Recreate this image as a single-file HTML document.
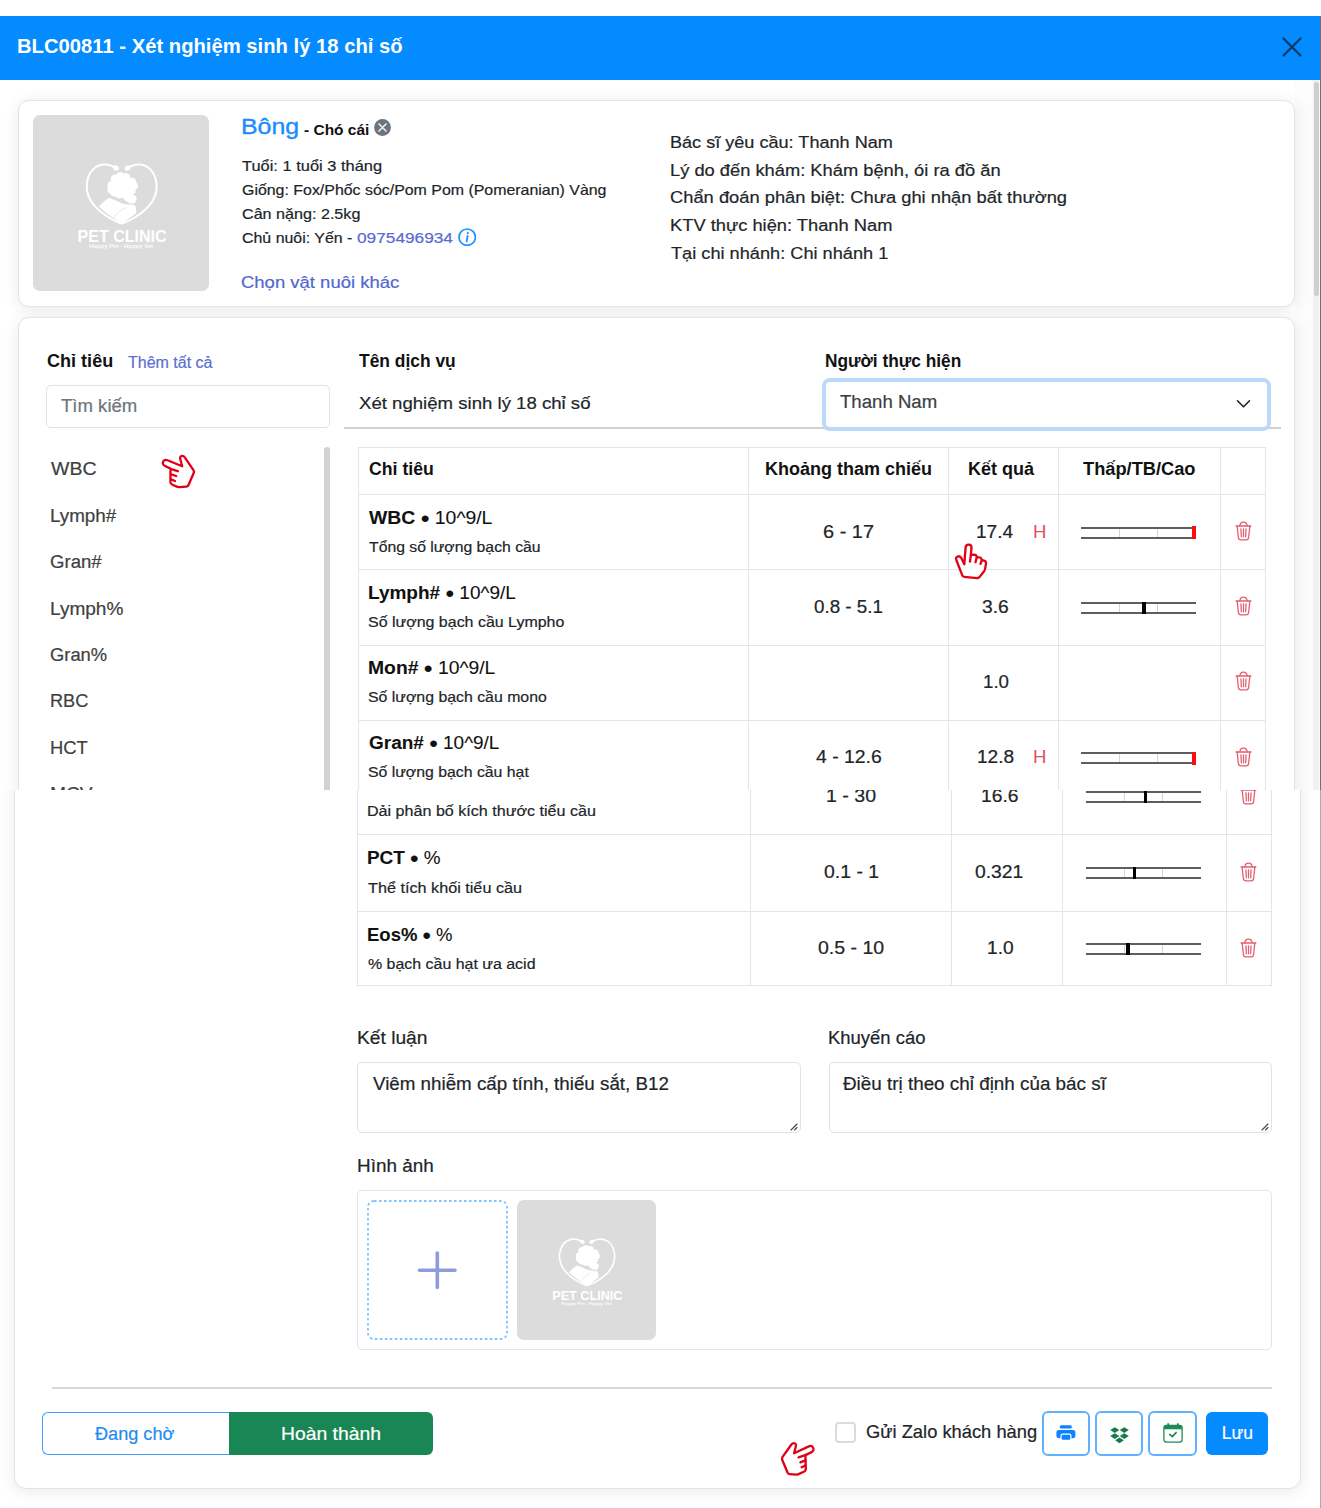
<!DOCTYPE html>
<html><head><meta charset="utf-8"><title>BLC00811</title>
<style>
html,body{margin:0;padding:0;background:#fff;}
body{width:1321px;height:1508px;position:relative;overflow:hidden;font-family:"Liberation Sans",sans-serif;}
.sec div,.sec svg{position:absolute;}
.t{white-space:pre;transform-origin:0 0;}
.sec{position:absolute;left:0;width:1321px;overflow:hidden;}
</style></head><body>
<div class="sec" style="top:0;height:790px">
<div style="left:0.0px;top:16.0px;width:1321.0px;height:64.0px;background:#048bff"></div>
<div class="t" style="left:16.99px;top:35.79px;font-size:20.1px;line-height:20.1px;color:#ffffff;font-weight:700;transform:scaleX(1.0068);">BLC00811 - Xét nghiệm sinh lý 18 chỉ số</div>
<svg style="position:absolute;left:1282.0px;top:37.0px;" width="20" height="20" viewBox="0 0 20 20"><path d="M1.5 1.5L18.5 18.5M18.5 1.5L1.5 18.5" stroke="#0b3a63" stroke-width="2.2" stroke-linecap="round"/></svg>
<div style="left:1295.0px;top:80.0px;width:25.0px;height:710.0px;background:#fcfcfc"></div>
<div style="left:1313.0px;top:80.0px;width:6.0px;height:710.0px;background:#f0f0f0"></div>
<div style="left:1313.5px;top:82.0px;width:5.0px;height:214.0px;background:#cfcfcf;border-radius:3px"></div>
<div style="left:1320.0px;top:16.0px;width:1.0px;height:774.0px;background:#707070"></div>
<div style="left:18.0px;top:100.0px;width:1277.0px;height:207.0px;background:#fff;border:1px solid #e1e4e8;border-radius:11px;box-sizing:border-box;box-shadow:0 2px 16px rgba(0,0,0,0.085)"></div>
<div style="left:33.0px;top:115.0px;width:176.0px;height:176.0px;background:#dcdcdc;border-radius:7px"></div>
<svg style="position:absolute;left:33.0px;top:115.0px" width="176.0" height="176.0"><g transform="scale(1.0000)">
<path d="M82.5 52.8C78 49.8 74 49.2 70.5 49.5C62 50.3 55.5 57 54 67.5C52.5 79 58.5 90 70 98.5C76.5 103.5 82.5 106.5 88.7 108.5C95 106.5 101 103.5 107.5 98.5C119 90 125 79 123.3 67.5C121.8 57 115.5 50.3 107 49.5C103.5 49.2 99.5 49.8 95 52.8" fill="none" stroke="#fff" stroke-width="2.1" stroke-linecap="round"/>
<ellipse cx="83" cy="53" rx="3" ry="2.4" transform="rotate(25 83 53)" fill="#fff"/><ellipse cx="94.5" cy="53" rx="3" ry="2.4" transform="rotate(-25 94.5 53)" fill="#fff"/>
<path d="M78 66C77 62 79.5 59 83 59.5C84.5 57 88.5 56.5 91 58.5C94 57.5 97.5 59.5 97.5 63C100 62 103.5 64 103.3 67.5C106 69.5 105.5 73.5 102.5 75C103 77.5 101.5 79.5 99 79.5L102 80.5C104.5 82.5 104 86.5 101.5 88C99.5 89 96 88.5 94.5 87C92.5 86 90.5 84.5 90 82.5C87.5 84 84.5 83.5 83 81.5C81 82 78 81 77.5 78.5C75 78 73.5 75 75 72.5C73.5 70.5 74.5 67 78 66Z" fill="#fff"/>
<path d="M66 91.5C68.5 88.5 72 85.5 75.5 83C78.5 83.5 82 85 85 86.5C88.5 88.5 92 89.5 95.5 89.5C98 89.5 100.5 89.8 102 90.5C103.2 93 103.4 95.5 103.2 98C98.5 102 93.5 105.5 88.7 108.3C81.5 104.5 73 98.5 66 91.5Z" fill="#fff"/>
<path d="M80.5 103C84 98 88.5 94.5 93 92.5" fill="none" stroke="#e6e6e6" stroke-width="0.9"/>
<text x="89.1" y="126.5" text-anchor="middle" font-family="Liberation Sans" font-weight="700" font-size="16.2" fill="#fff" textLength="89" lengthAdjust="spacingAndGlyphs">PET CLINIC</text>
<text x="88.1" y="133" text-anchor="middle" font-family="Liberation Sans" font-weight="700" font-size="5" fill="#fff" opacity="0.9" textLength="64" lengthAdjust="spacingAndGlyphs">Happy Pet - Happy Vet</text>
</g></svg>
<div class="t" style="left:240.98px;top:115.94px;font-size:22.4px;line-height:22.4px;color:#1a8cff;font-weight:400;transform:scaleX(1.1122);-webkit-text-stroke:0.35px currentColor">Bông</div>
<div class="t" style="left:304.00px;top:121.70px;font-size:15px;line-height:15px;color:#111111;font-weight:700;transform:scaleX(1.0317);">- Chó cái</div>
<svg style="position:absolute;left:373.5px;top:119.0px;" width="17" height="17" viewBox="0 0 17 17"><circle cx="8.5" cy="8.5" r="8.4" fill="#6c757d"/><path d="M5 5L12 12M12 5L5 12" stroke="#e9ecef" stroke-width="1.7" stroke-linecap="round"/></svg>
<div class="t" style="left:241.60px;top:158.93px;font-size:14.5px;line-height:14.5px;color:#212529;font-weight:400;transform:scaleX(1.1333);-webkit-text-stroke:0.2px currentColor">Tuổi: 1 tuổi 3 tháng</div>
<div class="t" style="left:241.60px;top:183.13px;font-size:14.5px;line-height:14.5px;color:#212529;font-weight:400;transform:scaleX(1.0976);-webkit-text-stroke:0.2px currentColor">Giống: Fox/Phốc sóc/Pom Pom (Pomeranian) Vàng</div>
<div class="t" style="left:241.60px;top:207.13px;font-size:14.5px;line-height:14.5px;color:#212529;font-weight:400;transform:scaleX(1.1123);-webkit-text-stroke:0.2px currentColor">Cân nặng: 2.5kg</div>
<div class="t" style="left:241.60px;top:231.13px;font-size:14.5px;line-height:14.5px;color:#212529;font-weight:400;transform:scaleX(1.0980);-webkit-text-stroke:0.2px currentColor">Chủ nuôi: Yến -</div>
<div class="t" style="left:357.00px;top:231.13px;font-size:14.5px;line-height:14.5px;color:#5b6ad0;font-weight:400;transform:scaleX(1.1901);-webkit-text-stroke:0.2px currentColor">0975496934</div>
<svg style="position:absolute;left:457.5px;top:227.8px;" width="18.4" height="18.4" viewBox="0 0 18.4 18.4"><circle cx="9.2" cy="9.2" r="8.2" fill="none" stroke="#1e90ff" stroke-width="1.7"/><circle cx="9.8" cy="5.2" r="1.1" fill="#1e90ff"/><path d="M9.6 8L8.7 13.3" stroke="#1e90ff" stroke-width="1.8" stroke-linecap="round"/></svg>
<div class="t" style="left:241.23px;top:274.36px;font-size:17.3px;line-height:17.3px;color:#5167d0;font-weight:400;transform:scaleX(1.0694);-webkit-text-stroke:0.2px currentColor">Chọn vật nuôi khác</div>
<div class="t" style="left:669.94px;top:134.12px;font-size:17.1px;line-height:17.1px;color:#212529;font-weight:400;transform:scaleX(1.0579);-webkit-text-stroke:0.2px currentColor">Bác sĩ yêu cầu: Thanh Nam</div>
<div class="t" style="left:669.93px;top:161.62px;font-size:17.1px;line-height:17.1px;color:#212529;font-weight:400;transform:scaleX(1.0704);-webkit-text-stroke:0.2px currentColor">Lý do đến khám: Khám bệnh, ói ra đồ ăn</div>
<div class="t" style="left:669.93px;top:189.32px;font-size:17.1px;line-height:17.1px;color:#212529;font-weight:400;transform:scaleX(1.0715);-webkit-text-stroke:0.2px currentColor">Chẩn đoán phân biệt: Chưa ghi nhận bất thường</div>
<div class="t" style="left:669.93px;top:217.02px;font-size:17.1px;line-height:17.1px;color:#212529;font-weight:400;transform:scaleX(1.0704);-webkit-text-stroke:0.2px currentColor">KTV thực hiện: Thanh Nam</div>
<div class="t" style="left:671.00px;top:244.92px;font-size:17.1px;line-height:17.1px;color:#212529;font-weight:400;transform:scaleX(1.0637);-webkit-text-stroke:0.2px currentColor">Tại chi nhánh: Chi nhánh 1</div>
<div style="left:18.0px;top:317.0px;width:1277.0px;height:683.0px;background:#fff;border:1px solid #e1e4e8;border-radius:11px;box-sizing:border-box;box-shadow:0 2px 16px rgba(0,0,0,0.085)"></div>
<div class="t" style="left:47.00px;top:352.89px;font-size:17.5px;line-height:17.5px;color:#111111;font-weight:700;transform:scaleX(1.0317);">Chỉ tiêu</div>
<div class="t" style="left:128.00px;top:355.46px;font-size:16px;line-height:16px;color:#5b6fd0;font-weight:400;transform:scaleX(1.0000);-webkit-text-stroke:0.2px currentColor">Thêm tất cả</div>
<div style="left:46.0px;top:384.5px;width:284.0px;height:43.0px;border:1px solid #dbe3ee;border-radius:5px;box-sizing:border-box;background:#fff"></div>
<div class="t" style="left:61.00px;top:398.09px;font-size:17.5px;line-height:17.5px;color:#6c757d;font-weight:400;transform:scaleX(1.0606);-webkit-text-stroke:0.2px currentColor">Tìm kiếm</div>
<div class="t" style="left:51.40px;top:460.46px;font-size:18px;line-height:18px;color:#404040;font-weight:400;transform:scaleX(1.0854);-webkit-text-stroke:0.2px currentColor">WBC</div>
<div class="t" style="left:50.35px;top:507.16px;font-size:18px;line-height:18px;color:#404040;font-weight:400;transform:scaleX(1.0460);-webkit-text-stroke:0.2px currentColor">Lymph#</div>
<div class="t" style="left:50.37px;top:553.06px;font-size:18px;line-height:18px;color:#404040;font-weight:400;transform:scaleX(1.0327);-webkit-text-stroke:0.2px currentColor">Gran#</div>
<div class="t" style="left:50.34px;top:599.56px;font-size:18px;line-height:18px;color:#404040;font-weight:400;transform:scaleX(1.0574);-webkit-text-stroke:0.2px currentColor">Lymph%</div>
<div class="t" style="left:50.38px;top:646.16px;font-size:18px;line-height:18px;color:#404040;font-weight:400;transform:scaleX(1.0200);-webkit-text-stroke:0.2px currentColor">Gran%</div>
<div class="t" style="left:50.39px;top:692.36px;font-size:18px;line-height:18px;color:#404040;font-weight:400;transform:scaleX(1.0083);-webkit-text-stroke:0.2px currentColor">RBC</div>
<div class="t" style="left:50.38px;top:738.86px;font-size:18px;line-height:18px;color:#404040;font-weight:400;transform:scaleX(1.0194);-webkit-text-stroke:0.2px currentColor">HCT</div>
<div class="t" style="left:50.33px;top:785.16px;font-size:18px;line-height:18px;color:#404040;font-weight:400;transform:scaleX(1.0667);-webkit-text-stroke:0.2px currentColor">MCV</div>
<div style="left:324.0px;top:447.0px;width:6.0px;height:353.0px;background:#d2d2d2;border-radius:3px"></div>
<div class="t" style="left:358.50px;top:352.89px;font-size:17.5px;line-height:17.5px;color:#111111;font-weight:700;transform:scaleX(0.9948);">Tên dịch vụ</div>
<div class="t" style="left:358.50px;top:394.64px;font-size:17.2px;line-height:17.2px;color:#212529;font-weight:400;transform:scaleX(1.0818);-webkit-text-stroke:0.2px currentColor">Xét nghiệm sinh lý 18 chỉ số</div>
<div class="t" style="left:825.41px;top:352.89px;font-size:17.5px;line-height:17.5px;color:#111111;font-weight:700;transform:scaleX(0.9882);">Người thực hiện</div>
<div style="left:344.0px;top:427.0px;width:936.6px;height:1.5px;background:#d0d0d0"></div>
<div style="left:821.5px;top:378.0px;width:449.5px;height:52.6px;border:4px solid #bcd8fb;border-radius:8px;box-sizing:border-box;background:#fff"></div>
<div class="t" style="left:840.30px;top:393.70px;font-size:17.6px;line-height:17.6px;color:#3a3f44;font-weight:400;transform:scaleX(1.0571);-webkit-text-stroke:0.2px currentColor">Thanh Nam</div>
<svg style="position:absolute;left:1236.0px;top:399.0px;" width="15" height="10" viewBox="0 0 15 10"><path d="M1.5 1.8L7.5 7.8L13.5 1.8" fill="none" stroke="#222" stroke-width="1.6" stroke-linecap="round" stroke-linejoin="round"/></svg>
<div style="left:358.4px;top:447.0px;width:907.4px;height:453.0px;border:1px solid #e2e6ec;box-sizing:border-box;background:#fff"></div>
<div style="left:748.2px;top:447.0px;width:1.0px;height:453.0px;background:#e2e6ec"></div>
<div style="left:947.7px;top:447.0px;width:1.0px;height:453.0px;background:#e2e6ec"></div>
<div style="left:1057.7px;top:447.0px;width:1.0px;height:453.0px;background:#e2e6ec"></div>
<div style="left:1220.4px;top:447.0px;width:1.0px;height:453.0px;background:#e2e6ec"></div>
<div style="left:358.4px;top:494.0px;width:907.4px;height:1.0px;background:#e2e6ec"></div>
<div style="left:358.4px;top:569.3px;width:907.4px;height:1.0px;background:#e2e6ec"></div>
<div style="left:358.4px;top:644.5px;width:907.4px;height:1.0px;background:#e2e6ec"></div>
<div style="left:358.4px;top:719.6px;width:907.4px;height:1.0px;background:#e2e6ec"></div>
<div class="t" style="left:369.30px;top:461.20px;font-size:17.6px;line-height:17.6px;color:#111111;font-weight:700;transform:scaleX(1.0047);">Chỉ tiêu</div>
<div class="t" style="left:765.18px;top:461.20px;font-size:17.6px;line-height:17.6px;color:#111111;font-weight:700;transform:scaleX(1.0236);">Khoảng tham chiếu</div>
<div class="t" style="left:968.48px;top:461.20px;font-size:17.6px;line-height:17.6px;color:#111111;font-weight:700;transform:scaleX(1.0234);">Kết quả</div>
<div class="t" style="left:1083.00px;top:461.20px;font-size:17.6px;line-height:17.6px;color:#111111;font-weight:700;transform:scaleX(1.0370);">Thấp/TB/Cao</div>
<div class="t" style="left:369.30px;top:508.76px;font-size:18.0px;line-height:18.0px;color:#111111;font-weight:400;transform:scaleX(1.0757);-webkit-text-stroke:0.08px currentColor"><b>WBC</b> <span style="font-size:1.3em;line-height:0;position:relative;top:3px">•</span> 10^9/L</div>
<div class="t" style="left:369.00px;top:538.73px;font-size:15.2px;line-height:15.2px;color:#212529;font-weight:400;transform:scaleX(1.0376);-webkit-text-stroke:0.2px currentColor">Tổng số lượng bạch cầu</div>
<div class="t" style="left:822.66px;top:523.59px;font-size:17.5px;line-height:17.5px;color:#212529;font-weight:400;transform:scaleX(1.1419);-webkit-text-stroke:0.2px currentColor">6 - 17</div>
<div class="t" style="left:975.91px;top:523.59px;font-size:17.5px;line-height:17.5px;color:#212529;font-weight:400;transform:scaleX(1.0909);-webkit-text-stroke:0.2px currentColor">17.4</div>
<div class="t" style="left:1033.44px;top:523.59px;font-size:17.5px;line-height:17.5px;color:#e0485c;font-weight:400;transform:scaleX(1.0636);opacity:0.95">H</div>
<div style="left:1081.0px;top:526.5px;width:115.0px;height:12px;border-top:2px solid #5e5e5e;border-bottom:2px solid #5e5e5e;box-sizing:border-box"></div>
<div style="left:1118.8px;top:528.5px;width:1.0px;height:8.0px;background:#d6d6d6"></div>
<div style="left:1157.2px;top:528.5px;width:1.0px;height:8.0px;background:#d6d6d6"></div>
<div style="left:1192.0px;top:526.0px;width:4.0px;height:13.0px;background:#ff0d0d"></div>
<svg style="position:absolute;left:1234.6px;top:520.9px;" width="17.0" height="20.0" viewBox="0 0 18 21"><g fill="none" stroke="#e35d6f" stroke-width="1.35" stroke-linejoin="round" stroke-linecap="round"><path d="M1.2 5.2H16.8"/><path d="M5.2 5.0C5.4 2.6 6.2 1.2 9 1.2C11.8 1.2 12.6 2.6 12.8 5.0"/><path d="M2.3 5.4L3.6 17.6C3.8 19.1 4.8 19.8 6.2 19.8H11.8C13.2 19.8 14.2 19.1 14.4 17.6L15.7 5.4"/><path d="M6.3 8.2L6.7 16.6M9 8.2V16.6M11.7 8.2L11.3 16.6"/></g></svg>
<div class="t" style="left:368.24px;top:584.06px;font-size:18.0px;line-height:18.0px;color:#111111;font-weight:400;transform:scaleX(1.0554);-webkit-text-stroke:0.08px currentColor"><b>Lymph#</b> <span style="font-size:1.3em;line-height:0;position:relative;top:3px">•</span> 10^9/L</div>
<div class="t" style="left:367.95px;top:614.03px;font-size:15.2px;line-height:15.2px;color:#212529;font-weight:400;transform:scaleX(1.0514);-webkit-text-stroke:0.2px currentColor">Số lượng bạch cầu Lympho</div>
<div class="t" style="left:813.60px;top:598.89px;font-size:17.5px;line-height:17.5px;color:#212529;font-weight:400;transform:scaleX(1.0734);-webkit-text-stroke:0.2px currentColor">0.8 - 5.1</div>
<div class="t" style="left:982.20px;top:598.89px;font-size:17.5px;line-height:17.5px;color:#212529;font-weight:400;transform:scaleX(1.1000);-webkit-text-stroke:0.2px currentColor">3.6</div>
<div style="left:1081.0px;top:601.8px;width:115.0px;height:12px;border-top:2px solid #5e5e5e;border-bottom:2px solid #5e5e5e;box-sizing:border-box"></div>
<div style="left:1118.8px;top:603.8px;width:1.0px;height:8.0px;background:#d6d6d6"></div>
<div style="left:1157.2px;top:603.8px;width:1.0px;height:8.0px;background:#d6d6d6"></div>
<div style="left:1142.2px;top:601.8px;width:3.6px;height:12.0px;background:#000"></div>
<svg style="position:absolute;left:1234.6px;top:596.2px;" width="17.0" height="20.0" viewBox="0 0 18 21"><g fill="none" stroke="#e35d6f" stroke-width="1.35" stroke-linejoin="round" stroke-linecap="round"><path d="M1.2 5.2H16.8"/><path d="M5.2 5.0C5.4 2.6 6.2 1.2 9 1.2C11.8 1.2 12.6 2.6 12.8 5.0"/><path d="M2.3 5.4L3.6 17.6C3.8 19.1 4.8 19.8 6.2 19.8H11.8C13.2 19.8 14.2 19.1 14.4 17.6L15.7 5.4"/><path d="M6.3 8.2L6.7 16.6M9 8.2V16.6M11.7 8.2L11.3 16.6"/></g></svg>
<div class="t" style="left:368.23px;top:659.26px;font-size:18.0px;line-height:18.0px;color:#111111;font-weight:400;transform:scaleX(1.0729);-webkit-text-stroke:0.08px currentColor"><b>Mon#</b> <span style="font-size:1.3em;line-height:0;position:relative;top:3px">•</span> 10^9/L</div>
<div class="t" style="left:367.96px;top:689.23px;font-size:15.2px;line-height:15.2px;color:#212529;font-weight:400;transform:scaleX(1.0441);-webkit-text-stroke:0.2px currentColor">Số lượng bạch cầu mono</div>
<div class="t" style="left:982.93px;top:674.09px;font-size:17.5px;line-height:17.5px;color:#212529;font-weight:400;transform:scaleX(1.0696);-webkit-text-stroke:0.2px currentColor">1.0</div>
<svg style="position:absolute;left:1234.6px;top:671.4px;" width="17.0" height="20.0" viewBox="0 0 18 21"><g fill="none" stroke="#e35d6f" stroke-width="1.35" stroke-linejoin="round" stroke-linecap="round"><path d="M1.2 5.2H16.8"/><path d="M5.2 5.0C5.4 2.6 6.2 1.2 9 1.2C11.8 1.2 12.6 2.6 12.8 5.0"/><path d="M2.3 5.4L3.6 17.6C3.8 19.1 4.8 19.8 6.2 19.8H11.8C13.2 19.8 14.2 19.1 14.4 17.6L15.7 5.4"/><path d="M6.3 8.2L6.7 16.6M9 8.2V16.6M11.7 8.2L11.3 16.6"/></g></svg>
<div class="t" style="left:369.30px;top:734.36px;font-size:18.0px;line-height:18.0px;color:#111111;font-weight:400;transform:scaleX(1.0540);-webkit-text-stroke:0.08px currentColor"><b>Gran#</b> <span style="font-size:1.3em;line-height:0;position:relative;top:3px">•</span> 10^9/L</div>
<div class="t" style="left:367.96px;top:764.33px;font-size:15.2px;line-height:15.2px;color:#212529;font-weight:400;transform:scaleX(1.0416);-webkit-text-stroke:0.2px currentColor">Số lượng bạch cầu hạt</div>
<div class="t" style="left:815.60px;top:749.19px;font-size:17.5px;line-height:17.5px;color:#212529;font-weight:400;transform:scaleX(1.1085);-webkit-text-stroke:0.2px currentColor">4 - 12.6</div>
<div class="t" style="left:976.91px;top:749.19px;font-size:17.5px;line-height:17.5px;color:#212529;font-weight:400;transform:scaleX(1.0909);-webkit-text-stroke:0.2px currentColor">12.8</div>
<div class="t" style="left:1033.44px;top:749.19px;font-size:17.5px;line-height:17.5px;color:#e0485c;font-weight:400;transform:scaleX(1.0636);opacity:0.95">H</div>
<div style="left:1081.0px;top:752.1px;width:115.0px;height:12px;border-top:2px solid #5e5e5e;border-bottom:2px solid #5e5e5e;box-sizing:border-box"></div>
<div style="left:1118.8px;top:754.1px;width:1.0px;height:8.0px;background:#d6d6d6"></div>
<div style="left:1157.2px;top:754.1px;width:1.0px;height:8.0px;background:#d6d6d6"></div>
<div style="left:1192.0px;top:751.6px;width:4.0px;height:13.0px;background:#ff0d0d"></div>
<svg style="position:absolute;left:1234.6px;top:746.5px;" width="17.0" height="20.0" viewBox="0 0 18 21"><g fill="none" stroke="#e35d6f" stroke-width="1.35" stroke-linejoin="round" stroke-linecap="round"><path d="M1.2 5.2H16.8"/><path d="M5.2 5.0C5.4 2.6 6.2 1.2 9 1.2C11.8 1.2 12.6 2.6 12.8 5.0"/><path d="M2.3 5.4L3.6 17.6C3.8 19.1 4.8 19.8 6.2 19.8H11.8C13.2 19.8 14.2 19.1 14.4 17.6L15.7 5.4"/><path d="M6.3 8.2L6.7 16.6M9 8.2V16.6M11.7 8.2L11.3 16.6"/></g></svg>
<svg style="position:absolute;left:150.0px;top:445.0px;" width="60" height="55" viewBox="0 0 60 55"><g fill="#fff" stroke="#e30016" stroke-width="2.3" stroke-linejoin="round" stroke-linecap="round"><path d="M20.5 23.6L14.6 20.8C12.8 19.9 12.3 17.9 13.3 16.3C14.2 14.9 15.9 14.6 17.5 15.3L32.2 21.3L30.2 13.8C29.8 12.3 30.6 11.1 31.9 10.9C33.1 10.7 34.1 11.3 34.8 12.4L43.6 25.3C44.1 26.0 44.1 27.0 43.8 27.8L38.4 40.2C38.0 41.1 37.2 41.6 36.2 41.7L29.8 42.2C28.9 42.3 28.2 42.1 27.4 41.8L22.4 39.8C21.1 39.3 20.4 38.1 20.4 36.8L20.5 23.6Z"/><path d="M21 24.1L27.9 26.2M21 29.3L26.2 31.0M21 34.4L25.0 36.0" fill="none"/></g></svg>
<svg style="position:absolute;left:945.0px;top:535.0px;" width="55" height="55" viewBox="0 0 55 55"><g fill="#fff" stroke="#e30016" stroke-width="2.3" stroke-linejoin="round" stroke-linecap="round"><path d="M19.3 29.3L20.6 12.4C20.8 10.6 22.2 9.5 23.8 9.6C25.4 9.7 26.6 11.0 26.5 12.7L25.9 19.8L29.4 19.6C30.6 19.6 31.5 20.4 31.7 21.6L32.0 22.1L34.5 22.3C35.6 22.5 36.4 23.2 36.6 24.3L36.9 25.2L39.0 25.7C40.3 26.0 41.2 27.3 41.0 28.6L40.0 34.3C39.8 35.0 39.6 35.6 39.1 36.2L34.4 42.1C33.7 42.9 32.8 43.3 31.8 43.2L19.2 41.9C18.3 41.8 17.6 41.2 17.3 40.4L11.3 25.0C10.6 23.2 11.5 21.7 13.1 21.3C14.3 21.0 15.3 21.6 16.1 22.6L19.3 29.3Z"/><path d="M25.9 19.8L25.0 26.5M31.8 22.1L30.5 27.2M36.8 25.2L35.5 28.9" fill="none"/></g></svg>
</div>
<div class="sec" style="top:790px;height:718px"><div style="left:0;top:-790px;width:1321px;height:1508px">
<div style="left:1320.0px;top:790.0px;width:1.0px;height:718.0px;background:#ababab"></div>
<div style="left:14.0px;top:600.0px;width:1287.0px;height:888.7px;background:#fff;border:1px solid #e1e4e8;border-radius:12px;box-sizing:border-box;box-shadow:0 3px 16px rgba(0,0,0,0.085)"></div>
<div style="left:357.0px;top:700.0px;width:915.0px;height:286.3px;border:1px solid #e2e6ec;box-sizing:border-box;background:#fff"></div>
<div style="left:749.7px;top:700.0px;width:1.0px;height:286.0px;background:#e2e6ec"></div>
<div style="left:951.2px;top:700.0px;width:1.0px;height:286.0px;background:#e2e6ec"></div>
<div style="left:1061.5px;top:700.0px;width:1.0px;height:286.0px;background:#e2e6ec"></div>
<div style="left:1225.8px;top:700.0px;width:1.0px;height:286.0px;background:#e2e6ec"></div>
<div style="left:357.0px;top:834.3px;width:915.0px;height:1.0px;background:#e2e6ec"></div>
<div style="left:357.0px;top:910.5px;width:915.0px;height:1.0px;background:#e2e6ec"></div>
<div class="t" style="left:366.95px;top:803.45px;font-size:15.3px;line-height:15.3px;color:#212529;font-weight:400;transform:scaleX(1.0519);-webkit-text-stroke:0.2px currentColor">Dải phân bố kích thước tiểu cầu</div>
<div class="t" style="left:825.89px;top:787.90px;font-size:17.6px;line-height:17.6px;color:#212529;font-weight:400;transform:scaleX(1.1136);-webkit-text-stroke:0.2px currentColor">1 - 30</div>
<div class="t" style="left:980.81px;top:787.90px;font-size:17.6px;line-height:17.6px;color:#212529;font-weight:400;transform:scaleX(1.0939);-webkit-text-stroke:0.2px currentColor">16.6</div>
<div style="left:1086.0px;top:790.8px;width:115.0px;height:12px;border-top:2px solid #5e5e5e;border-bottom:2px solid #5e5e5e;box-sizing:border-box"></div>
<div style="left:1123.8px;top:792.8px;width:1.0px;height:8.0px;background:#d6d6d6"></div>
<div style="left:1162.2px;top:792.8px;width:1.0px;height:8.0px;background:#d6d6d6"></div>
<div style="left:1143.7px;top:790.8px;width:3.6px;height:12.0px;background:#000"></div>
<svg style="position:absolute;left:1240.2px;top:785.3px;" width="17.0" height="20.0" viewBox="0 0 18 21"><g fill="none" stroke="#e35d6f" stroke-width="1.35" stroke-linejoin="round" stroke-linecap="round"><path d="M1.2 5.2H16.8"/><path d="M5.2 5.0C5.4 2.6 6.2 1.2 9 1.2C11.8 1.2 12.6 2.6 12.8 5.0"/><path d="M2.3 5.4L3.6 17.6C3.8 19.1 4.8 19.8 6.2 19.8H11.8C13.2 19.8 14.2 19.1 14.4 17.6L15.7 5.4"/><path d="M6.3 8.2L6.7 16.6M9 8.2V16.6M11.7 8.2L11.3 16.6"/></g></svg>
<div class="t" style="left:366.96px;top:849.38px;font-size:18.1px;line-height:18.1px;color:#111111;font-weight:400;transform:scaleX(1.0435);-webkit-text-stroke:0.08px currentColor"><b>PCT</b> <span style="font-size:1.3em;line-height:0;position:relative;top:3px">•</span> %</div>
<div class="t" style="left:368.00px;top:879.75px;font-size:15.3px;line-height:15.3px;color:#212529;font-weight:400;transform:scaleX(1.0593);-webkit-text-stroke:0.2px currentColor">Thể tích khối tiểu cầu</div>
<div class="t" style="left:823.50px;top:864.20px;font-size:17.6px;line-height:17.6px;color:#212529;font-weight:400;transform:scaleX(1.1041);-webkit-text-stroke:0.2px currentColor">0.1 - 1</div>
<div class="t" style="left:975.30px;top:864.20px;font-size:17.6px;line-height:17.6px;color:#212529;font-weight:400;transform:scaleX(1.0977);-webkit-text-stroke:0.2px currentColor">0.321</div>
<div style="left:1086.0px;top:867.1px;width:115.0px;height:12px;border-top:2px solid #5e5e5e;border-bottom:2px solid #5e5e5e;box-sizing:border-box"></div>
<div style="left:1123.8px;top:869.1px;width:1.0px;height:8.0px;background:#d6d6d6"></div>
<div style="left:1162.2px;top:869.1px;width:1.0px;height:8.0px;background:#d6d6d6"></div>
<div style="left:1132.7px;top:867.1px;width:3.6px;height:12.0px;background:#000"></div>
<svg style="position:absolute;left:1240.2px;top:861.6px;" width="17.0" height="20.0" viewBox="0 0 18 21"><g fill="none" stroke="#e35d6f" stroke-width="1.35" stroke-linejoin="round" stroke-linecap="round"><path d="M1.2 5.2H16.8"/><path d="M5.2 5.0C5.4 2.6 6.2 1.2 9 1.2C11.8 1.2 12.6 2.6 12.8 5.0"/><path d="M2.3 5.4L3.6 17.6C3.8 19.1 4.8 19.8 6.2 19.8H11.8C13.2 19.8 14.2 19.1 14.4 17.6L15.7 5.4"/><path d="M6.3 8.2L6.7 16.6M9 8.2V16.6M11.7 8.2L11.3 16.6"/></g></svg>
<div class="t" style="left:366.98px;top:925.58px;font-size:18.1px;line-height:18.1px;color:#111111;font-weight:400;transform:scaleX(1.0220);-webkit-text-stroke:0.08px currentColor"><b>Eos%</b> <span style="font-size:1.3em;line-height:0;position:relative;top:3px">•</span> %</div>
<div class="t" style="left:368.00px;top:955.95px;font-size:15.3px;line-height:15.3px;color:#212529;font-weight:400;transform:scaleX(1.0419);-webkit-text-stroke:0.2px currentColor">% bạch cầu hạt ưa acid</div>
<div class="t" style="left:818.30px;top:940.40px;font-size:17.6px;line-height:17.6px;color:#212529;font-weight:400;transform:scaleX(1.1102);-webkit-text-stroke:0.2px currentColor">0.5 - 10</div>
<div class="t" style="left:986.51px;top:940.40px;font-size:17.6px;line-height:17.6px;color:#212529;font-weight:400;transform:scaleX(1.0870);-webkit-text-stroke:0.2px currentColor">1.0</div>
<div style="left:1086.0px;top:943.3px;width:115.0px;height:12px;border-top:2px solid #5e5e5e;border-bottom:2px solid #5e5e5e;box-sizing:border-box"></div>
<div style="left:1123.8px;top:945.3px;width:1.0px;height:8.0px;background:#d6d6d6"></div>
<div style="left:1162.2px;top:945.3px;width:1.0px;height:8.0px;background:#d6d6d6"></div>
<div style="left:1126.0px;top:943.3px;width:3.6px;height:12.0px;background:#000"></div>
<svg style="position:absolute;left:1240.2px;top:937.8px;" width="17.0" height="20.0" viewBox="0 0 18 21"><g fill="none" stroke="#e35d6f" stroke-width="1.35" stroke-linejoin="round" stroke-linecap="round"><path d="M1.2 5.2H16.8"/><path d="M5.2 5.0C5.4 2.6 6.2 1.2 9 1.2C11.8 1.2 12.6 2.6 12.8 5.0"/><path d="M2.3 5.4L3.6 17.6C3.8 19.1 4.8 19.8 6.2 19.8H11.8C13.2 19.8 14.2 19.1 14.4 17.6L15.7 5.4"/><path d="M6.3 8.2L6.7 16.6M9 8.2V16.6M11.7 8.2L11.3 16.6"/></g></svg>
<div class="t" style="left:357.13px;top:1028.76px;font-size:18.0px;line-height:18.0px;color:#212529;font-weight:400;transform:scaleX(1.0672);-webkit-text-stroke:0.2px currentColor">Kết luận</div>
<div class="t" style="left:828.28px;top:1028.76px;font-size:18.0px;line-height:18.0px;color:#212529;font-weight:400;transform:scaleX(1.0245);-webkit-text-stroke:0.2px currentColor">Khuyến cáo</div>
<div style="left:357.0px;top:1061.6px;width:444.0px;height:71.9px;border:1px solid #dce4ee;border-radius:5px;box-sizing:border-box;background:#fff"></div>
<svg style="position:absolute;left:790.0px;top:1122.5px;" width="8" height="8" viewBox="0 0 8 8"><path d="M7 1L1 7M7 4.5L4.5 7" stroke="#444" stroke-width="1.1" stroke-linecap="round"/></svg>
<div style="left:829.0px;top:1061.6px;width:443.2px;height:71.9px;border:1px solid #dce4ee;border-radius:5px;box-sizing:border-box;background:#fff"></div>
<svg style="position:absolute;left:1261.2px;top:1122.5px;" width="8" height="8" viewBox="0 0 8 8"><path d="M7 1L1 7M7 4.5L4.5 7" stroke="#444" stroke-width="1.1" stroke-linecap="round"/></svg>
<div class="t" style="left:373.00px;top:1075.79px;font-size:17.5px;line-height:17.5px;color:#212529;font-weight:400;transform:scaleX(1.0721);-webkit-text-stroke:0.2px currentColor">Viêm nhiễm cấp tính, thiếu sắt, B12</div>
<div class="t" style="left:843.40px;top:1075.79px;font-size:17.5px;line-height:17.5px;color:#212529;font-weight:400;transform:scaleX(1.0767);-webkit-text-stroke:0.2px currentColor">Điều trị theo chỉ định của bác sĩ</div>
<div class="t" style="left:357.15px;top:1157.16px;font-size:18.0px;line-height:18.0px;color:#212529;font-weight:400;transform:scaleX(1.0493);-webkit-text-stroke:0.2px currentColor">Hình ảnh</div>
<div style="left:357.3px;top:1189.7px;width:914.9px;height:159.9px;border:1px solid #e2e6ec;border-radius:5px;box-sizing:border-box;background:#fff"></div>
<svg style="position:absolute;left:367.0px;top:1200.0px;" width="141" height="140" viewBox="0 0 141 140"><rect x="1" y="1" width="139" height="138" rx="6" fill="none" stroke="#82c4ff" stroke-width="1.8" stroke-dasharray="2.6 2.4"/></svg>
<svg style="position:absolute;left:417.0px;top:1249.5px;" width="41" height="41" viewBox="0 0 41 41"><path d="M20.3 3V37.5M2.5 20.2H38" stroke="#8f9bda" stroke-width="3.6" stroke-linecap="round"/></svg>
<div style="left:516.7px;top:1200.0px;width:139.0px;height:140.0px;background:#dcdcdc;border-radius:7px"></div>
<svg style="position:absolute;left:516.7px;top:1200.0px" width="139.0" height="139.0"><g transform="scale(0.7898)">
<path d="M82.5 52.8C78 49.8 74 49.2 70.5 49.5C62 50.3 55.5 57 54 67.5C52.5 79 58.5 90 70 98.5C76.5 103.5 82.5 106.5 88.7 108.5C95 106.5 101 103.5 107.5 98.5C119 90 125 79 123.3 67.5C121.8 57 115.5 50.3 107 49.5C103.5 49.2 99.5 49.8 95 52.8" fill="none" stroke="#fff" stroke-width="2.1" stroke-linecap="round"/>
<ellipse cx="83" cy="53" rx="3" ry="2.4" transform="rotate(25 83 53)" fill="#fff"/><ellipse cx="94.5" cy="53" rx="3" ry="2.4" transform="rotate(-25 94.5 53)" fill="#fff"/>
<path d="M78 66C77 62 79.5 59 83 59.5C84.5 57 88.5 56.5 91 58.5C94 57.5 97.5 59.5 97.5 63C100 62 103.5 64 103.3 67.5C106 69.5 105.5 73.5 102.5 75C103 77.5 101.5 79.5 99 79.5L102 80.5C104.5 82.5 104 86.5 101.5 88C99.5 89 96 88.5 94.5 87C92.5 86 90.5 84.5 90 82.5C87.5 84 84.5 83.5 83 81.5C81 82 78 81 77.5 78.5C75 78 73.5 75 75 72.5C73.5 70.5 74.5 67 78 66Z" fill="#fff"/>
<path d="M66 91.5C68.5 88.5 72 85.5 75.5 83C78.5 83.5 82 85 85 86.5C88.5 88.5 92 89.5 95.5 89.5C98 89.5 100.5 89.8 102 90.5C103.2 93 103.4 95.5 103.2 98C98.5 102 93.5 105.5 88.7 108.3C81.5 104.5 73 98.5 66 91.5Z" fill="#fff"/>
<path d="M80.5 103C84 98 88.5 94.5 93 92.5" fill="none" stroke="#e6e6e6" stroke-width="0.9"/>
<text x="89.1" y="126.5" text-anchor="middle" font-family="Liberation Sans" font-weight="700" font-size="16.2" fill="#fff" textLength="89" lengthAdjust="spacingAndGlyphs">PET CLINIC</text>
<text x="88.1" y="133" text-anchor="middle" font-family="Liberation Sans" font-weight="700" font-size="5" fill="#fff" opacity="0.9" textLength="64" lengthAdjust="spacingAndGlyphs">Happy Pet - Happy Vet</text>
</g></svg>
<div style="left:52.3px;top:1387.0px;width:1220.0px;height:2.0px;background:#d9d9d9"></div>
<div style="left:42px;top:1411.5px;width:186.7px;height:43.9px;border:1.8px solid #3f9dff;border-right:none;border-radius:6px 0 0 6px;box-sizing:border-box;background:#fff"></div>
<div class="t" style="left:95.20px;top:1425.16px;font-size:18px;line-height:18px;color:#1d8cf5;font-weight:400;transform:scaleX(1.0063);-webkit-text-stroke:0.2px currentColor">Đang chờ</div>
<div style="left:228.7px;top:1411.5px;width:204.5px;height:43.9px;background:#198754;border-radius:0 6px 6px 0"></div>
<div class="t" style="left:280.93px;top:1425.16px;font-size:18px;line-height:18px;color:#ffffff;font-weight:400;transform:scaleX(1.0747);-webkit-text-stroke:0.2px currentColor">Hoàn thành</div>
<div style="left:834.8px;top:1421.8px;width:21.2px;height:20.9px;border:2px solid #d7dbe3;border-radius:4px;box-sizing:border-box;background:#fff"></div>
<div class="t" style="left:865.97px;top:1423.73px;font-size:17.8px;line-height:17.8px;color:#212529;font-weight:400;transform:scaleX(1.0305);-webkit-text-stroke:0.2px currentColor">Gửi Zalo khách hàng</div>
<div style="left:1041.7px;top:1410.9px;width:48.6px;height:45.4px;border:2px solid #5fb0ff;border-radius:6px;box-sizing:border-box;background:#fff"></div>
<div style="left:1094.9px;top:1410.9px;width:48.5px;height:45.4px;border:2px solid #5fb0ff;border-radius:6px;box-sizing:border-box;background:#fff"></div>
<div style="left:1148.3px;top:1410.9px;width:48.4px;height:45.4px;border:2px solid #5fb0ff;border-radius:6px;box-sizing:border-box;background:#fff"></div>
<svg style="position:absolute;left:1056.0px;top:1424.5px;" width="20" height="16" viewBox="0 0 20 16"><g fill="#0a84ff"><rect x="3.7" y="0.3" width="12.2" height="3.3" rx="1.6"/><rect x="0.4" y="4.9" width="19" height="8.3" rx="2.6"/></g><rect x="5" y="9.2" width="9.9" height="6.2" rx="1.6" fill="#0a84ff" stroke="#fff" stroke-width="1.2"/></svg>
<svg style="position:absolute;left:1110.0px;top:1426.5px;" width="19" height="17" viewBox="0 0 19 17"><g fill="#177d48"><path d="M4.75 0.3L9.3 3.1L4.75 5.9L0.2 3.1Z"/><path d="M14.25 0.3L18.8 3.1L14.25 5.9L9.7 3.1Z"/><path d="M4.75 6.3L9.3 9.1L4.75 11.9L0.2 9.1Z"/><path d="M14.25 6.3L18.8 9.1L14.25 11.9L9.7 9.1Z"/><path d="M9.5 10.5L13.9 13.3L9.5 16.3L5.1 13.3Z"/></g></svg>
<svg style="position:absolute;left:1163.0px;top:1422.8px;" width="20" height="20" viewBox="0 0 20 20"><g fill="none" stroke="#1e8a54" stroke-width="1.3"><rect x="0.9" y="2.3" width="18.2" height="16.8" rx="2.3"/><path d="M6.8 11.4L9.3 13.7L13.1 9.7" stroke-width="1.7" stroke-linecap="round" stroke-linejoin="round"/></g><path d="M1 4.8C1 3.3 2 2.3 3.4 2.3H16.6C18 2.3 19 3.3 19 4.8V6.2H1Z" fill="#1e8a54"/><rect x="4.3" y="0.3" width="1.8" height="3" fill="#1e8a54"/><rect x="13.9" y="0.3" width="1.8" height="3" fill="#1e8a54"/></svg>
<div style="left:1205.8px;top:1411.8px;width:61.8px;height:43.6px;background:#048bff;border-radius:6px"></div>
<div class="t" style="left:1221.70px;top:1425.39px;font-size:17.5px;line-height:17.5px;color:#ffffff;font-weight:400;transform:scaleX(1.0000);-webkit-text-stroke:0.2px currentColor">Lưu</div>
<svg style="position:absolute;left:770.0px;top:1430.0px;" width="55" height="55" viewBox="0 0 55 55"><g fill="#fff" stroke="#e30016" stroke-width="2.3" stroke-linejoin="round" stroke-linecap="round"><path d="M35.4 25.1L41.6 22.1C43.4 21.2 44 19.2 43.1 17.6C42.2 16.1 40.4 15.6 38.8 16.4L24.1 23.3L25.9 15.9C26.2 14.4 25.4 13.3 24.1 13.1C23 12.9 22.1 13.5 21.4 14.5L12.4 27.2C11.9 28 11.9 29 12.2 29.8L17.5 42.5C17.9 43.4 18.7 44 19.7 44.1L26 44.6C26.9 44.7 27.7 44.4 28.5 44.1L33.8 41.8C35.1 41.2 35.9 40 35.8 38.7L35.4 25.1Z"/><path d="M35.3 25.2L28.6 27.3M35.5 30.4L30.4 32.4M35.6 35.4L31.6 37.3" fill="none"/></g></svg>
</div></div>
</body></html>
